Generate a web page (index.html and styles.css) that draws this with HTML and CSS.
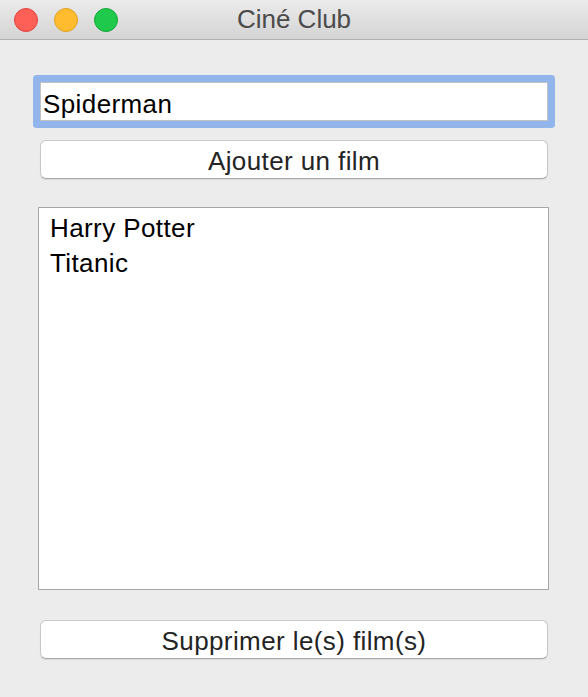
FILE: index.html
```html
<!DOCTYPE html>
<html lang="fr">
<head>
<meta charset="utf-8">
<title>Ciné Club</title>
<link rel="stylesheet" href="styles.css">
</head>
<body>
<div class="window">
  <header class="titlebar">
    <div class="lights">
      <span class="light red"></span>
      <span class="light yellow"></span>
      <span class="light green"></span>
    </div>
    <div class="title">Ciné Club</div>
    <div></div>
  </header>
  <main class="content">
    <div class="field">Spiderman</div>
    <div class="button add">Ajouter un film</div>
    <ul class="list">
      <li>Harry Potter</li>
      <li>Titanic</li>
    </ul>
    <div class="button remove">Supprimer le(s) film(s)</div>
  </main>
</div>
</body>
</html>
```
FILE: styles.css
```css
* { box-sizing: border-box; }
html, body {
  margin: 0;
  padding: 0;
  background: #ececec;
}
body {
  font-family: "Liberation Sans", Arial, sans-serif;
  font-size: 26px;
  color: #000;
}
.window {
  width: 588px;
  height: 697px;
  background: #ececec;
  overflow: hidden;
}
.titlebar {
  height: 40px;
  display: grid;
  grid-template-columns: 1fr auto 1fr;
  align-items: center;
  background: linear-gradient(#ebebeb, #d4d4d4);
  border-bottom: 1px solid #b0b0b0;
}
.lights {
  display: flex;
  gap: 16px;
  padding-left: 14px;
  align-items: center;
}
.light {
  width: 24px;
  height: 24px;
  border-radius: 50%;
  display: block;
}
.red { background: #fe5f57; border: 1px solid #e0443e; }
.yellow { background: #febc2e; border: 1px solid #dea123; }
.green { background: #1fc94b; border: 1px solid #14a737; }
.title {
  color: #4b4b4b;
  line-height: 39px;
  font-size: 26px;
}
.content {
  padding: 0 40px;
  display: flex;
  flex-direction: column;
  letter-spacing: 0.4px;
}
.field {
  margin-top: 42px;
  height: 39px;
  background: #fff;
  border: 1px solid #c2c2c2;
  border-radius: 1px;
  padding: 5px 2px 0;
  line-height: 32px;
  box-shadow: 0 0 0 7px #92b6ec;
}
.button {
  height: 39px;
  background: #fff;
  border: 1px solid #c8c8c8;
  border-bottom-color: #a9a9a9;
  border-radius: 6px;
  box-shadow: 0 1px 1px rgba(0,0,0,0.08);
  text-align: center;
  padding-top: 4px;
  line-height: 33px;
  color: #242424;
}
.add { margin-top: 19px; }
.list {
  list-style: none;
  margin: 28px -1px 0 -2px;
  padding: 3px 0 0 11px;
  height: 383px;
  background: #fff;
  border: 1px solid #a7a7a7;
}
.list li {
  line-height: 35px;
}
.remove { margin-top: 30px; }
```
